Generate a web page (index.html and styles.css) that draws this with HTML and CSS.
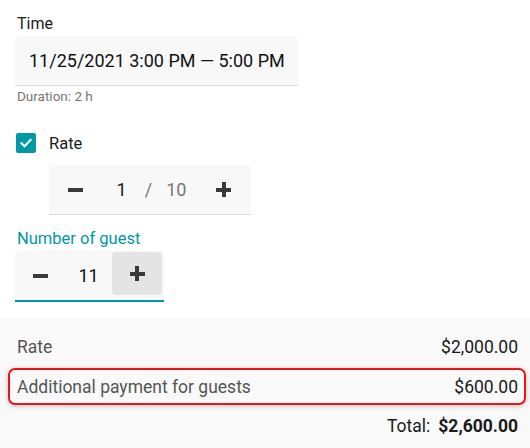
FILE: index.html
```html
<!DOCTYPE html>
<html>
<head>
<meta charset="utf-8">
<link rel="stylesheet" href="styles.css">
</head>
<body>
<div class="form">
  <div class="label">Time</div>
  <div class="time-box">11/25/2021 3:00 PM — 5:00 PM</div>
  <div class="duration">Duration: 2 h</div>

  <div class="check-row">
    <span class="checkbox">
      <svg width="14" height="14" viewBox="0 0 14 14"><path d="M2.5 7.2 L5.6 10.2 L11.5 4" fill="none" stroke="#fff" stroke-width="2.2" stroke-linecap="square"/></svg>
    </span>
    <span class="check-label">Rate</span>
  </div>

  <div class="rate-stepper">
    <span class="btn"><span class="minus"></span></span>
    <span class="rate-value"><span class="cur">1</span><span class="slash">/</span><span class="max">10</span></span>
    <span class="btn"><span class="plus"></span></span>
  </div>

  <div class="guest-label">Number of guest</div>
  <div class="guest-stepper">
    <span class="gbtn"><span class="minus"></span></span>
    <span class="guest-value">11</span>
    <span class="gbtn active"><span class="plus"></span></span>
  </div>
</div>

<div class="summary">
  <div class="row">
    <span class="name">Rate</span>
    <span class="amount">$2,000.00</span>
  </div>
  <div class="row highlight">
    <span class="name">Additional payment for guests</span>
    <span class="amount">$600.00</span>
  </div>
  <div class="total">
    <span class="total-label">Total:</span>
    <span class="total-value">$2,600.00</span>
  </div>
</div>
</body>
</html>
```
FILE: styles.css
```css
html, body {
  margin: 0;
  padding: 0;
  background: #fff;
  font-family: Roboto, "Liberation Sans", sans-serif;
  color: #212121;
}

.form {
  padding: 14px 0 0 15px;
  height: 304px;
  box-sizing: border-box;
}

.label {
  font-size: 16px;
  line-height: 20px;
  padding-left: 2px;
  color: #1a1a1a;
}

.time-box {
  margin-top: 2px;
  width: 283px;
  height: 50px;
  box-sizing: border-box;
  background: #f8f8f8;
  border-bottom: 1px solid #dcdcdc;
  border-radius: 4px 4px 0 0;
  display: flex;
  align-items: center;
  padding-left: 14px;
  font-size: 18px;
  color: #111;
}

.duration {
  font-size: 13.5px;
  line-height: 16px;
  margin-top: 2px;
  padding-left: 2px;
  color: #757575;
}

.check-row {
  margin-top: 29px;
  display: flex;
  align-items: center;
  height: 20px;
  padding-left: 1px;
}

.checkbox {
  width: 20px;
  height: 20px;
  border-radius: 2px;
  background: #0097a7;
  display: flex;
  align-items: center;
  justify-content: center;
}

.check-label {
  margin-left: 13px;
  font-size: 16.5px;
  color: #1a1a1a;
}

.rate-stepper {
  margin-top: 12px;
  margin-left: 34px;
  width: 202px;
  height: 50px;
  box-sizing: border-box;
  background: #f8f8f8;
  border-bottom: 1px solid #dcdcdc;
  border-radius: 4px 4px 0 0;
  display: flex;
  align-items: center;
  justify-content: space-between;
  padding: 0 10px 0 9px;
}

.btn {
  width: 34px;
  height: 40px;
  display: flex;
  align-items: center;
  justify-content: center;
}

.minus {
  display: block;
  width: 15px;
  height: 4px;
  background: #3a3a3a;
}

.plus {
  display: block;
  width: 15px;
  height: 15px;
  background:
    linear-gradient(#3a3a3a, #3a3a3a) center / 15px 4px no-repeat,
    linear-gradient(#3a3a3a, #3a3a3a) center / 4px 15px no-repeat;
}

.rate-value {
  font-size: 18px;
  display: flex;
  align-items: center;
  margin-left: 4px;
}

.rate-value .cur {
  color: #1a1a1a;
}

.rate-value .slash {
  color: #777;
  margin: 0 14px 0 18px;
}

.rate-value .max {
  color: #777;
}

.guest-label {
  margin-top: 14px;
  font-size: 16.5px;
  line-height: 20px;
  padding-left: 2px;
  color: #0097a7;
}

.guest-stepper {
  margin-top: 2px;
  width: 149px;
  height: 51px;
  box-sizing: border-box;
  background: #f8f8f8;
  border-bottom: 2px solid #0097a7;
  border-radius: 4px 4px 0 0;
  display: flex;
  align-items: center;
  padding: 0 1px 0 0;
}

.gbtn {
  width: 50px;
  height: 43px;
  border-radius: 4px;
  display: flex;
  align-items: center;
  justify-content: center;
}

.gbtn.active {
  background: #e4e4e4;
  margin-top: -4px;
}

.guest-value {
  width: 47px;
  text-align: center;
  font-size: 18px;
  color: #111;
}

.summary {
  margin-top: 14px;
  background: #f9f9f9;
  height: 130px;
  padding: 10px 0 0 8px;
  box-sizing: border-box;
  width: 530px;
}

.row {
  width: 518px;
  height: 37px;
  box-sizing: border-box;
  display: flex;
  align-items: center;
  justify-content: space-between;
  padding: 0 6px 0 7px;
  font-size: 17.5px;
  border: 2px solid transparent;
  margin-bottom: 3px;
}

.row .name {
  color: #555;
}

.row .amount {
  color: #1a1a1a;
}

.highlight {
  border-color: #e8141c;
  border-radius: 7px;
  box-shadow: 0 1px 5px rgba(0, 0, 0, 0.25);
}

.total {
  width: 510px;
  display: flex;
  justify-content: flex-end;
  align-items: center;
  height: 36px;
  font-size: 17.5px;
  color: #1a1a1a;
}

.total-value {
  font-weight: bold;
  margin-left: 8px;
}
```
